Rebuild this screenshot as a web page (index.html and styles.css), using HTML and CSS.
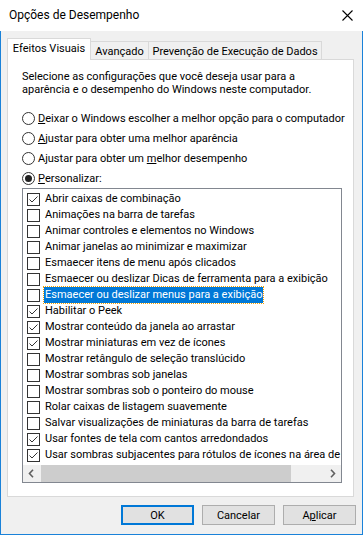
FILE: index.html
```html
<!DOCTYPE html>
<html lang="pt-BR">
<head>
<meta charset="utf-8">
<title>Opções de Desempenho</title>
<link rel="stylesheet" href="styles.css">
</head>
<body>
<div class="window">
  <div class="titlebar">
    <span class="title">Opções de Desempenho</span>
    <svg class="close" width="11" height="11" viewBox="0 0 11 11"><path d="M0.5 0.5 L10.5 10.5 M10.5 0.5 L0.5 10.5" stroke="#000" stroke-width="1.1" fill="none"/></svg>
  </div>
  <div class="client">
    <div class="tabs">
      <div class="tab active">Efeitos Visuais</div>
      <div class="tab t2">Avançado</div>
      <div class="tab t3">Prevenção de Execução de Dados</div>
    </div>
    <div class="panel">
      <p class="desc">Selecione as configurações que você deseja usar para a<br>aparência e o desempenho do Windows neste computador.</p>
      <div class="radios">
        <div class="radio"><span class="rb"></span><span><u>D</u>eixar o Windows escolher a melhor opção para o computador</span></div>
        <div class="radio"><span class="rb"></span><span><u>A</u>justar para obter uma melhor aparência</span></div>
        <div class="radio"><span class="rb"></span><span>Ajustar para obter um <u>m</u>elhor desempenho</span></div>
        <div class="radio"><span class="rb on"></span><span><u>P</u>ersonalizar:</span></div>
      </div>
      <div class="listbox">
        <div class="rows">
          <div class="row"><span class="cb"><svg viewBox="0 0 11 11" width="11" height="11"><path d="M1.5 5.5 L4 8 L9.5 2.5" stroke="#333" stroke-width="1" fill="none"/></svg></span><span class="lbl">Abrir caixas de combinação</span></div>
          <div class="row"><span class="cb"></span><span class="lbl">Animações na barra de tarefas</span></div>
          <div class="row"><span class="cb"></span><span class="lbl">Animar controles e elementos no Windows</span></div>
          <div class="row"><span class="cb"></span><span class="lbl">Animar janelas ao minimizar e maximizar</span></div>
          <div class="row"><span class="cb"></span><span class="lbl">Esmaecer itens de menu após clicados</span></div>
          <div class="row"><span class="cb"></span><span class="lbl">Esmaecer ou deslizar Dicas de ferramenta para a exibição</span></div>
          <div class="row"><span class="cb"></span><span class="lbl sel">Esmaecer ou deslizar menus para a exibição</span></div>
          <div class="row"><span class="cb"><svg viewBox="0 0 11 11" width="11" height="11"><path d="M1.5 5.5 L4 8 L9.5 2.5" stroke="#333" stroke-width="1" fill="none"/></svg></span><span class="lbl">Habilitar o Peek</span></div>
          <div class="row"><span class="cb"><svg viewBox="0 0 11 11" width="11" height="11"><path d="M1.5 5.5 L4 8 L9.5 2.5" stroke="#333" stroke-width="1" fill="none"/></svg></span><span class="lbl">Mostrar conteúdo da janela ao arrastar</span></div>
          <div class="row"><span class="cb"><svg viewBox="0 0 11 11" width="11" height="11"><path d="M1.5 5.5 L4 8 L9.5 2.5" stroke="#333" stroke-width="1" fill="none"/></svg></span><span class="lbl">Mostrar miniaturas em vez de ícones</span></div>
          <div class="row"><span class="cb"></span><span class="lbl">Mostrar retângulo de seleção translúcido</span></div>
          <div class="row"><span class="cb"></span><span class="lbl">Mostrar sombras sob janelas</span></div>
          <div class="row"><span class="cb"></span><span class="lbl">Mostrar sombras sob o ponteiro do mouse</span></div>
          <div class="row"><span class="cb"></span><span class="lbl">Rolar caixas de listagem suavemente</span></div>
          <div class="row"><span class="cb"></span><span class="lbl">Salvar visualizações de miniaturas da barra de tarefas</span></div>
          <div class="row"><span class="cb"><svg viewBox="0 0 11 11" width="11" height="11"><path d="M1.5 5.5 L4 8 L9.5 2.5" stroke="#333" stroke-width="1" fill="none"/></svg></span><span class="lbl">Usar fontes de tela com cantos arredondados</span></div>
          <div class="row"><span class="cb"><svg viewBox="0 0 11 11" width="11" height="11"><path d="M1.5 5.5 L4 8 L9.5 2.5" stroke="#333" stroke-width="1" fill="none"/></svg></span><span class="lbl">Usar sombras subjacentes para rótulos de ícones na área de trabalho</span></div>
        </div>
        <div class="hscroll">
          <span class="arrow"><svg width="7" height="9" viewBox="0 0 7 9"><path d="M5 0.8 L1.5 4.5 L5 8.2" stroke="#606060" stroke-width="1.6" fill="none"/></svg></span>
          <span class="track"><span class="thumb"></span></span>
          <span class="arrow"><svg width="7" height="9" viewBox="0 0 7 9"><path d="M2 0.8 L5.5 4.5 L2 8.2" stroke="#606060" stroke-width="1.6" fill="none"/></svg></span>
        </div>
      </div>
    </div>
    <div class="buttons">
      <button class="btn default">OK</button>
      <button class="btn">Cancelar</button>
      <button class="btn">A<u>p</u>licar</button>
    </div>
  </div>
</div>
</body>
</html>
```
FILE: styles.css
```css
html, body {
  margin: 0;
  padding: 0;
}
body {
  font-family: Roboto, "Liberation Sans", sans-serif;
  font-size: 11px;
  color: #000;
  background: #ffffff;
}
.window {
  width: 363px;
  height: 535px;
  display: flex;
  flex-direction: column;
}
.titlebar {
  height: 31px;
  flex: none;
  background: #fff;
  display: flex;
  align-items: center;
  justify-content: space-between;
  padding: 0 10px 1px 9px;
  box-sizing: border-box;
}
.title {
  font-size: 12px;
  color: #000;
}
.close {
  display: block;
}
.client {
  flex: 1;
  background: #f0f0f0;
  border: 1px solid #1a82d9;
  border-top: none;
  padding: 7px 6px 0 6px;
  box-sizing: border-box;
}
.tabs {
  display: flex;
  align-items: flex-end;
  height: 21px;
}
.tab {
  box-sizing: border-box;
  height: 18px;
  border: 1px solid #d9d9d9;
  border-bottom: none;
  border-left: none;
  background: #f0f0f0;
  display: flex;
  align-items: center;
  justify-content: center;
  white-space: nowrap;
  padding-top: 1px;
}
.tab.active {
  width: 84px;
  height: 22px;
  margin-bottom: -1px;
  border-left: 1px solid #d9d9d9;
  background: #fff;
  position: relative;
  z-index: 1;
  padding-top: 0;
  padding-bottom: 3px;
}
.t2 { width: 58px; }
.t3 { width: 173px; }
.panel {
  width: 347px;
  height: 438px;
  box-sizing: border-box;
  border: 1px solid #d9d9d9;
  background: #fff;
  padding: 0 0 0 14px;
}
.desc {
  margin: 10px 0 0 0;
  line-height: 13px;
  height: 38px;
}
.radios {
  display: flex;
  flex-direction: column;
}
.radio {
  height: 20px;
  display: flex;
  align-items: center;
  white-space: nowrap;
}
.rb {
  width: 13px;
  height: 13px;
  box-sizing: border-box;
  border: 1px solid #333;
  border-radius: 50%;
  background: #fff;
  margin-right: 3px;
  display: flex;
  align-items: center;
  justify-content: center;
  flex: none;
}
.rb.on::after {
  content: "";
  width: 7px;
  height: 7px;
  border-radius: 50%;
  background: #222;
}
u {
  text-decoration: underline;
  text-underline-offset: 1px;
}
.listbox {
  width: 320px;
  height: 295px;
  box-sizing: border-box;
  border: 1px solid #828790;
  background: #fff;
  display: flex;
  flex-direction: column;
  overflow: hidden;
}
.rows {
  padding-top: 2px;
  overflow: hidden;
}
.row {
  height: 16px;
  display: flex;
  align-items: center;
  padding-left: 4px;
  white-space: nowrap;
}
.cb {
  width: 13px;
  height: 13px;
  box-sizing: border-box;
  border: 1px solid #333;
  background: #fff;
  margin-right: 4px;
  flex: none;
  display: flex;
  align-items: center;
  justify-content: center;
}
.cb svg {
  display: block;
}
.lbl {
  line-height: 14px;
  padding: 0 1px;
}
.lbl.sel {
  background: #0078d7;
  color: #fff;
  outline: 1px dotted #f4a000;
  outline-offset: 0;
  line-height: 14px;
  padding: 1px 1px;
}
.hscroll {
  margin-top: auto;
  height: 17px;
  display: flex;
  background: #f0f0f0;
  flex: none;
}
.arrow {
  width: 17px;
  flex: none;
  display: flex;
  align-items: center;
  justify-content: center;
}
.track {
  flex: 1;
  display: flex;
  padding-left: 1px;
}
.thumb {
  width: 250px;
  background: #cdcdcd;
}
.buttons {
  display: flex;
  justify-content: flex-end;
  gap: 8px;
  margin-top: 8px;
}
.btn {
  width: 73px;
  height: 20px;
  box-sizing: border-box;
  border: 1px solid #adadad;
  background: #e1e1e1;
  font-family: Roboto, "Liberation Sans", sans-serif;
  font-size: 11px;
  color: #000;
  padding: 0;
  margin: 0;
  border-radius: 0;
}
.btn.default {
  border: 2px solid #0078d7;
}
```
